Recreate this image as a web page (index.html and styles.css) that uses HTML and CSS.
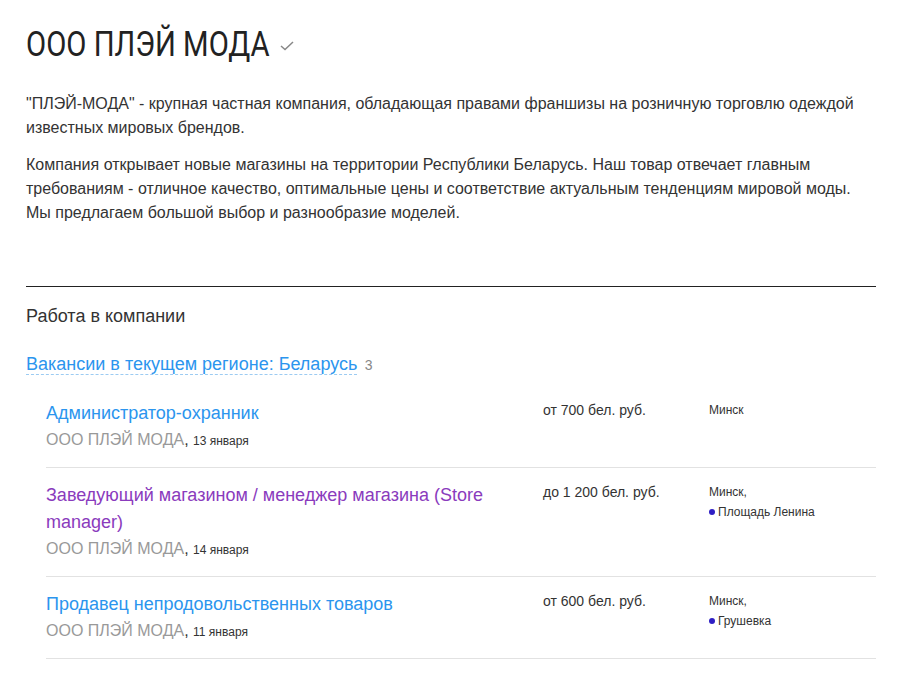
FILE: index.html
```html
<!DOCTYPE html>
<html lang="ru">
<head>
    <meta charset="UTF-8">
    <meta name="viewport" content="width=device-width, initial-scale=1.0">
    <title>ООО ПЛЭЙ МОДА</title>
    <link rel="stylesheet" href="styles.css">
</head>
<body>
    <div class="page">
        <div class="company-header">
            <h1>ООО ПЛЭЙ МОДА</h1>
            <svg class="verified" width="14" height="10" viewBox="0 0 14 10">
                <path d="M1 5 L5 8.5 L13 1" fill="none" stroke="#888" stroke-width="1.5"/>
            </svg>
        </div>

        <div class="description">
            <p>"ПЛЭЙ-МОДА" - крупная частная компания, обладающая правами франшизы на розничную торговлю одеждой известных мировых брендов.</p>
            <p>Компания открывает новые магазины на территории Республики Беларусь. Наш товар отвечает главным требованиям - отличное качество, оптимальные цены и соответствие актуальным тенденциям мировой моды. Мы предлагаем большой выбор и разнообразие моделей.</p>
        </div>

        <div class="jobs">
            <h2>Работа в компании</h2>
            <div class="region">
                <a href="#" class="region-link">Вакансии в текущем регионе: Беларусь</a>
                <span class="count">3</span>
            </div>

            <div class="vacancy-list">
                <div class="vacancy">
                    <div class="vacancy-main">
                        <a href="#" class="vacancy-title">Администратор-охранник</a>
                        <div class="vacancy-meta"><span class="employer">ООО ПЛЭЙ МОДА</span>, <span class="date">13 января</span></div>
                    </div>
                    <div class="salary">от 700 бел. руб.</div>
                    <div class="address">Минск</div>
                </div>
                <div class="vacancy">
                    <div class="vacancy-main">
                        <a href="#" class="vacancy-title visited">Заведующий магазином / менеджер магазина (Store manager)</a>
                        <div class="vacancy-meta"><span class="employer">ООО ПЛЭЙ МОДА</span>, <span class="date">14 января</span></div>
                    </div>
                    <div class="salary">до 1 200 бел. руб.</div>
                    <div class="address">Минск,<br><span class="metro">Площадь Ленина</span></div>
                </div>
                <div class="vacancy">
                    <div class="vacancy-main">
                        <a href="#" class="vacancy-title">Продавец непродовольственных товаров</a>
                        <div class="vacancy-meta"><span class="employer">ООО ПЛЭЙ МОДА</span>, <span class="date">11 января</span></div>
                    </div>
                    <div class="salary">от 600 бел. руб.</div>
                    <div class="address">Минск,<br><span class="metro">Грушевка</span></div>
                </div>
            </div>
        </div>
    </div>
</body>
</html>
```
FILE: styles.css
```css
body {
    margin: 0;
    font-family: "Liberation Sans", Arial, sans-serif;
    color: #333;
    background-color: #fff;
}
.page {
    width: 850px;
    padding: 22px 0 0 26px;
}
.company-header {
    display: flex;
    align-items: center;
}
/* narrow headline: no condensed face installed, so squeeze Roboto */
h1 {
    margin: 0 -48px 0 0;
    font-family: Roboto, sans-serif;
    font-weight: 400;
    font-size: 35px;
    line-height: 46px;
    color: #222;
    transform: scaleX(0.836);
    transform-origin: left center;
}
.verified {
    margin: 2px 0 0 11px;
}
.description {
    margin-top: 24px;
    padding-bottom: 61px;
    border-bottom: 1px solid #222;
}
.description p {
    margin: 0 0 13px;
    font-size: 16px;
    line-height: 24px;
}
.description p:last-child {
    margin-bottom: 0;
}
h2 {
    margin: 17px 0 0;
    font-size: 18px;
    font-weight: 400;
    line-height: 24px;
    color: #333;
}
.region {
    margin-top: 24px;
    line-height: 24px;
}
.region-link {
    font-size: 18px;
    color: #2b95ee;
    text-decoration: none;
    border-bottom: 1px dashed #9ccbf2;
}
.count {
    font-size: 14px;
    color: #888;
    margin-left: 3px;
}
.vacancy-list {
    margin-top: 9px;
    padding-left: 20px;
}
.vacancy {
    display: grid;
    grid-template-columns: 497px 166px 1fr;
    padding: 14px 0 15px;
    border-bottom: 1px solid #e2e2e2;
}
.vacancy-main {
    padding-right: 10px;
}
.vacancy-title {
    display: block;
    font-size: 18px;
    line-height: 27px;
    color: #2b95ee;
    text-decoration: none;
}
.vacancy-title.visited {
    color: #8a3bbd;
}
.vacancy-meta {
    height: 25px;
    line-height: 25px;
    font-size: 16px;
}
.employer {
    color: #999;
}
.date {
    font-size: 12px;
    line-height: 12px;
    color: #333;
}
.salary {
    font-size: 14px;
    line-height: 20px;
}
.address {
    font-size: 12px;
    line-height: 20px;
}
.metro::before {
    content: "";
    display: inline-block;
    width: 6px;
    height: 6px;
    margin-right: 3px;
    border-radius: 50%;
    background-color: #2f1fc4;
    vertical-align: 1px;
}
```
